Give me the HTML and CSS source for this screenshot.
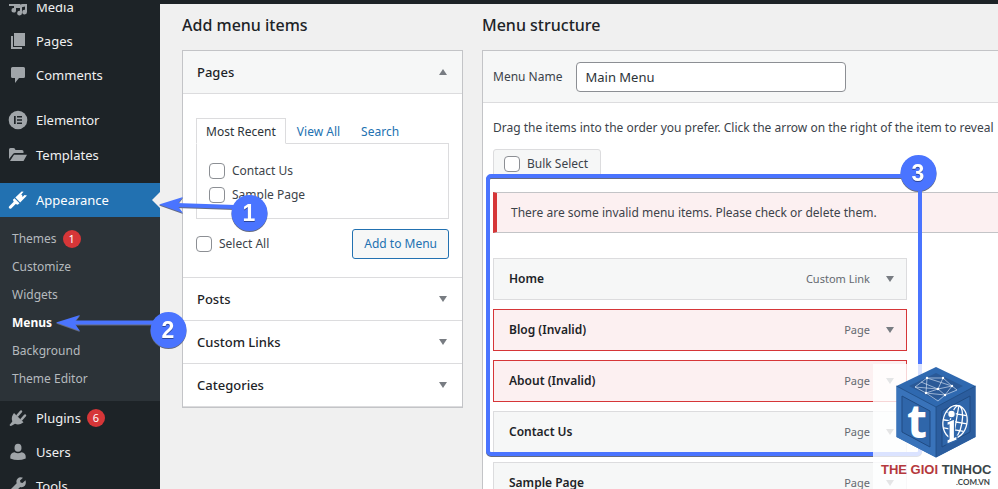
FILE: index.html
```html
<!DOCTYPE html>
<html lang="en">
<head>
<meta charset="utf-8">
<title>Menus</title>
<link rel="stylesheet" href="styles.css">
</head>
<body>
<div class="screen">
  <header class="topbar"></header>
  <div class="layout">
    <nav class="sidebar">
      <ul class="menu">
        <li><a class="item" href="#"><svg class="icon" viewBox="0 0 20 20"><path d="M1 3h11v8H8v2a2.300 2.300 0 1 1-2-2V9H1zM19 6v9a2.400 2.400 0 1 1-2-2.300V9.500l-3 .8V16a2.400 2.400 0 1 1-2-2.300V7.500z"/></svg>Media</a></li>
        <li><a class="item" href="#"><svg class="icon" viewBox="0 0 20 20"><path d="M6 2h11v13H6zM3 5h2v11h9v2H3z"/></svg>Pages</a></li>
        <li><a class="item" href="#"><svg class="icon" viewBox="0 0 20 20"><path d="M4.500 2h11A1.500 1.500 0 0 1 17 3.500v8a1.500 1.500 0 0 1-1.500 1.500H11l-4 5v-5H4.500A1.500 1.500 0 0 1 3 11.500v-8A1.500 1.500 0 0 1 4.500 2z"/></svg>Comments</a></li>
      </ul>
      <ul class="menu spaced">
        <li><a class="item" href="#"><svg class="icon" viewBox="0 0 20 20"><circle cx="10" cy="10" r="9.300"/><path class="cut" d="M6 6h1.700v8H6zM9 6h5v1.600H9zM9 9.200h5v1.600H9zM9 12.400h5V14H9z"/></svg>Elementor</a></li>
        <li><a class="item" href="#"><svg class="icon" viewBox="0 0 20 20"><path d="M1 14V4.500Q1 3 2.500 3h3Q7 3 7.500 5H14q1.500 0 1.500 1.500V8H7q-1.300 0-2 1zM2 16l4-6.200h13L15.500 16z"/></svg>Templates</a></li>
      </ul>
      <ul class="menu spaced last">
        <li>
          <a class="item current" href="#"><svg class="icon" viewBox="0 0 20 20"><path d="M14.500 6.900l2-1.800L19 5.600l-6.800 7-4.900-5.200L13.600 1.500l2 .3-3 3.500 1.400-.7zM6.500 8.200l5 5-1.800 1.500-2-.6-4.500 4.300Q1.800 19 1 18q-.8-1 .5-2l4.200-4.300-.8-2z"/></svg>Appearance</a>
          <ul class="submenu">
            <li><a href="#">Themes <span class="count">1</span></a></li>
            <li><a href="#">Customize</a></li>
            <li><a href="#">Widgets</a></li>
            <li><a class="active" href="#">Menus</a></li>
            <li><a href="#">Background</a></li>
            <li><a href="#">Theme Editor</a></li>
          </ul>
        </li>
        <li><a class="item" href="#"><svg class="icon" viewBox="0 0 20 20"><path d="M6 5l9.500 9.300q-4.500 3.500-8.500 1.500L4 17.500q-1.500 1-2.500-.5L4.300 13.500Q2.500 9.500 6 5z"/><path class="prong" d="M9.500 7.500L13 3.500M13.500 11.500L17 7.500"/></svg>Plugins <span class="count">6</span></a></li>
        <li><a class="item" href="#"><svg class="icon" viewBox="0 0 20 20"><ellipse cx="10" cy="5.800" rx="3.500" ry="4"/><path d="M6.500 10.200q3.500 2 7 0 4.200.8 4.200 4.300v2q-7.700 3-15.400 0v-2q0-3.500 4.200-4.300z"/></svg>Users</a></li>
        <li><a class="item" href="#"><svg class="icon" viewBox="0 0 20 20"><path d="M17.500 4.300L14.500 7l-2-.5-.5-2L15 1.700q-3.500-1-5.500 1-1.700 2-.8 4.600L2 14q-1 2 .3 3.300t3.400.2l6.500-6.600q2.800.8 4.600-1.200 1.700-2.200.7-5.400z"/></svg>Tools</a></li>
      </ul>
    </nav>

    <main class="content">
      <section class="col-add">
        <h2>Add menu items</h2>
        <div class="accordion">
          <h3 class="acc-title open">Pages<span class="arrow up"></span></h3>
          <div class="acc-body">
            <div class="tabs">
              <a class="tab selected" href="#">Most Recent</a>
              <a class="tab" href="#">View All</a>
              <a class="tab" href="#">Search</a>
            </div>
            <div class="tab-panel">
              <label class="check"><input type="checkbox">Contact Us</label>
              <label class="check"><input type="checkbox">Sample Page</label>
            </div>
            <div class="actions">
              <label class="check"><input type="checkbox">Select All</label>
              <button class="button" type="button">Add to Menu</button>
            </div>
          </div>
          <h3 class="acc-title">Posts<span class="arrow"></span></h3>
          <h3 class="acc-title">Custom Links<span class="arrow"></span></h3>
          <h3 class="acc-title">Categories<span class="arrow"></span></h3>
        </div>
      </section>

      <section class="col-edit">
        <h2>Menu structure</h2>
        <div class="panel">
          <div class="panel-head">
            <label for="menu-name">Menu Name</label>
            <input id="menu-name" class="text" type="text" value="Main Menu">
          </div>
          <div class="panel-body">
            <p class="hint">Drag the items into the order you prefer. Click the arrow on the right of the item to reveal</p>
            <label class="check bulk"><input type="checkbox">Bulk Select</label>
            <div class="notice">There are some invalid menu items. Please check or delete them.</div>
            <ul class="items">
              <li class="entry"><span class="name">Home</span><span class="type">Custom Link</span><span class="arrow"></span></li>
              <li class="entry invalid"><span class="name">Blog (Invalid)</span><span class="type">Page</span><span class="arrow"></span></li>
              <li class="entry invalid"><span class="name">About (Invalid)</span><span class="type">Page</span><span class="arrow"></span></li>
              <li class="entry"><span class="name">Contact Us</span><span class="type">Page</span><span class="arrow"></span></li>
              <li class="entry"><span class="name">Sample Page</span><span class="type">Page</span><span class="arrow"></span></li>
            </ul>
          </div>
        </div>
      </section>
    </main>
  </div>

  <svg class="marks" width="998" height="489" viewBox="0 0 998 489">
    <g class="shade">
      <rect class="frame" x="488" y="176" width="432" height="278" rx="3"/>
      <path class="line" d="M250 207.500L176 205M169 322.500H74"/>
      <path class="head" d="M159 204.500L183 197l-6 8 6 8zM56 322.500L80 315l-6 7.500 6 8.500z"/>
      <circle cx="249.500" cy="213" r="18"/>
      <circle cx="168.500" cy="330" r="18"/>
      <circle cx="918.500" cy="173" r="18"/>
    </g>
    <g class="digits">
      <text x="249" y="221">1</text>
      <text x="168" y="338">2</text>
      <text x="918" y="181">3</text>
    </g>
  </svg>

  <div class="watermark">
    <svg class="cube" viewBox="0 0 80 92">
      <path fill="#2f69b0" d="M40 1l39.500 19v51L40 91.500.5 71V20z"/>
      <path fill="#2b5d9e" d="M40 41l39.500-21v51L40 91.500z"/>
      <path fill="#3973ba" d="M.5 20L40 41v50.500L.5 71z"/>
      <path fill="#2a5997" d="M40 7l27 13-27 14-27-14z"/>
      <path fill="#2f66aa" stroke="#204b83" d="M6 30l28 15v36L6 66zM74 30L46 45v36l28-15z"/>
      <path fill="none" stroke="#204b83" stroke-width=".8" d="M.5 20L40 41l39.500-21M40 41v50"/>
      <path fill="none" stroke="#e4effc" stroke-width=".6" d="M19 21l12-9 16 0 9 8-7 9-7 6-12-8zM31 12l-1 15 12-4 5-11M19 21l23 2 14-3M42 23l7 6 12-5-5-4M25 16l17 7M30 27l19 2M31 12l25 8"/>
      <g fill="#fff"><circle cx="31" cy="12" r="1.200"/><circle cx="47" cy="12" r="1.200"/><circle cx="42" cy="23" r="1.300"/><circle cx="30" cy="27" r="1.200"/><circle cx="49" cy="29" r="1.200"/><circle cx="56" cy="20" r="1.200"/></g>
      <text class="tee" x="21" y="72">t</text>
      <g fill="none" stroke="#fff" stroke-width="1.300" transform="rotate(10 60 56)"><ellipse cx="59" cy="56" rx="12" ry="16.500"/><ellipse cx="60" cy="56" rx="6" ry="16.500"/><path d="M60 40v33M49 48h20M47 56h24M49 64h20"/></g>
      <g fill="#fff" stroke="#2f66aa" stroke-width="1.200"><circle cx="55.500" cy="48" r="3.800"/><path d="M51 56l7.500-3v18l2.500-1v4l-10 4v-4l2-1V59l-2 .8z"/></g>
    </svg>
    <div class="brand"><span class="red">THE GIOI</span> TINHOC</div>
    <div class="domain">.COM.VN</div>
  </div>
</div>
</body>
</html>
```

FILE: styles.css
```css
* { box-sizing: border-box; }

body {
  margin: 0;
  background: #f0f0f0;
  color: #3c434a;
  font: 12px/20px "Noto Sans", "Open Sans", sans-serif;
}

ul { margin: 0; padding: 0; list-style: none; }
a { text-decoration: none; }

.screen { position: relative; height: 100vh; overflow: hidden; }
.topbar { position: relative; z-index: 1; height: 4px; background: #1d2327; }
.layout { display: flex; min-height: 100%; }

/* Sidebar */
.sidebar { flex: 0 0 160px; margin-top: -14px; background: #1d2327; }
.menu.spaced { margin-top: 10px; }
.item {
  display: flex;
  align-items: center;
  height: 34px;
  padding-left: 8px;
  color: #f0f0f1;
  font-size: 13px;
}
.menu.spaced .item { height: 35px; }
.menu.last { margin-top: 11px; }
.menu.last .item { height: 34px; }
.icon { width: 20px; height: 20px; margin-right: 8px; fill: #a0a5a9; }
.icon .cut { fill: #1d2327; }
.icon .prong { fill: none; stroke: #a0a5a9; stroke-width: 2.5; stroke-linecap: round; }
.current { position: relative; background: #2271b1; color: #fff; }
.current .icon { fill: #fff; }
.current::after {
  content: "";
  position: absolute;
  right: 0;
  border: 8px solid transparent;
  border-left-width: 0;
  border-right-color: #f0f0f0;
}
.submenu { padding: 8px 0; background: #2c3338; }
.submenu a {
  display: flex;
  align-items: center;
  height: 28px;
  padding-left: 12px;
  color: #b5babe;
}
.submenu .active { color: #fff; font-weight: 700; }
.count {
  width: 18px;
  height: 18px;
  margin-left: 6px;
  border-radius: 50%;
  background: #d63638;
  color: #fff;
  font-size: 11px;
  line-height: 18px;
  text-align: center;
}

/* Content */
.content { display: flex; flex: 1; gap: 19px; min-width: 0; padding-left: 22px; }
h2 { margin: 11px 0 15px; color: #1d2327; font-size: 16px; font-weight: 500; line-height: 20px; }
.col-add { flex: 0 0 281px; }
.col-edit { flex: 1; min-width: 0; }

.accordion { border: 1px solid #c3c4c7; background: #fff; }
.acc-title {
  display: flex;
  align-items: center;
  justify-content: space-between;
  height: 43px;
  margin: 0;
  padding: 0 15px 0 14px;
  border-bottom: 1px solid #dcdcde;
  color: #1d2327;
  font-size: 13px;
  font-weight: 500;
}
.acc-title.open { background: #f6f7f7; }
.arrow { border: 4px solid transparent; border-top: 6px solid #787c82; border-bottom: 0; }
.arrow.up { border-top: 0; border-bottom: 6px solid #787c82; }
.acc-body { padding: 24px 13px 18px; border-bottom: 1px solid #dcdcde; }
.tabs { display: flex; gap: 1px; }
.tab { height: 26px; padding: 3px 9px; border: 1px solid transparent; color: #2271b1; }
.tab.selected {
  position: relative;
  margin-bottom: -1px;
  border-color: #dcdcde;
  border-bottom-color: #fff;
  background: #fff;
  color: #2c3338;
}
.tab-panel { padding: 15px 12px 11px; border: 1px solid #dcdcde; }
.tabs + .tab-panel { margin-top: -1px; }
.check { display: flex; align-items: center; gap: 7px; height: 24px; }
.check input {
  appearance: none;
  width: 16px;
  height: 16px;
  margin: 0;
  border: 1px solid #8c8f94;
  border-radius: 4px;
  background: #fff;
}
.actions { display: flex; align-items: center; justify-content: space-between; margin-top: 10px; }
.button {
  height: 30px;
  padding: 0 11px;
  border: 1px solid #2271b1;
  border-radius: 3px;
  background: #f6f7f7;
  color: #2271b1;
  font: inherit;
}

.panel { min-height: 100%; border: 1px solid #c3c4c7; border-right: 0; background: #fff; }
.panel-head {
  display: flex;
  align-items: center;
  gap: 14px;
  height: 52px;
  padding-left: 10px;
  border-bottom: 1px solid #dcdcde;
  background: #f6f7f7;
}
.text {
  width: 270px;
  height: 30px;
  padding: 0 8px;
  border: 1px solid #8c8f94;
  border-radius: 4px;
  background: #fff;
  color: #2c3338;
  font: inherit;
  font-size: 13px;
}
.panel-body { padding: 15px 0 0 10px; }
.hint { margin: 0 0 11px; overflow: hidden; white-space: nowrap; }
.bulk {
  width: 108px;
  height: 30px;
  padding-left: 10px;
  border: 1px solid #dcdcde;
  border-radius: 3px;
  background: #f6f7f7;
}
.notice {
  margin: 13px 0 25px;
  padding: 10px 14px 9px;
  border: 1px solid #c3c4c7;
  border-left: 4px solid #d63638;
  border-right: 0;
  background: #fcf0f1;
}
.items { display: grid; gap: 9px; max-width: 414px; }
.entry {
  display: flex;
  align-items: center;
  height: 42px;
  padding: 0 12px 0 15px;
  border: 1px solid #dcdcde;
  background: #f6f7f7;
}
.entry.invalid { border-color: #d63638; background: #fcf0f1; }
.name { flex: 1; color: #1d2327; font-weight: 600; }
.type { margin-right: 16px; color: #646970; font-size: 11px; }

/* Annotations */
.marks { position: absolute; top: 0; left: 0; fill: #4a74ff; }
.shade { filter: drop-shadow(0 1px 0 #666c80); }
.frame { fill: none; stroke: #4a74ff; stroke-width: 4; }
.line { fill: none; stroke: #4a74ff; stroke-width: 4; }
.digits {
  fill: #fff;
  font: 700 23px "Liberation Sans", sans-serif;
  text-anchor: middle;
  filter: drop-shadow(0 1px 0 #2c4699);
}

/* Watermark */
.watermark {
  position: absolute;
  right: 0;
  bottom: 0;
  width: 125px;
  height: 125px;
  padding: 2px 8px 0;
  background: rgba(255, 255, 255, .8);
  color: #3b4648;
  font-family: "Liberation Sans", sans-serif;
  font-weight: 700;
}
.cube { display: block; width: 80px; height: 92px; margin-left: 15px; }
.tee { fill: #fff; font: 700 46px "Open Sans", sans-serif; text-anchor: middle; }
.brand { margin-top: 4px; font-size: 13px; line-height: 16px; white-space: nowrap; text-align: center; }
.brand .red { color: #b5393d; }
.domain { font: 700 8px/8px Lato, sans-serif; text-align: right; }
```
